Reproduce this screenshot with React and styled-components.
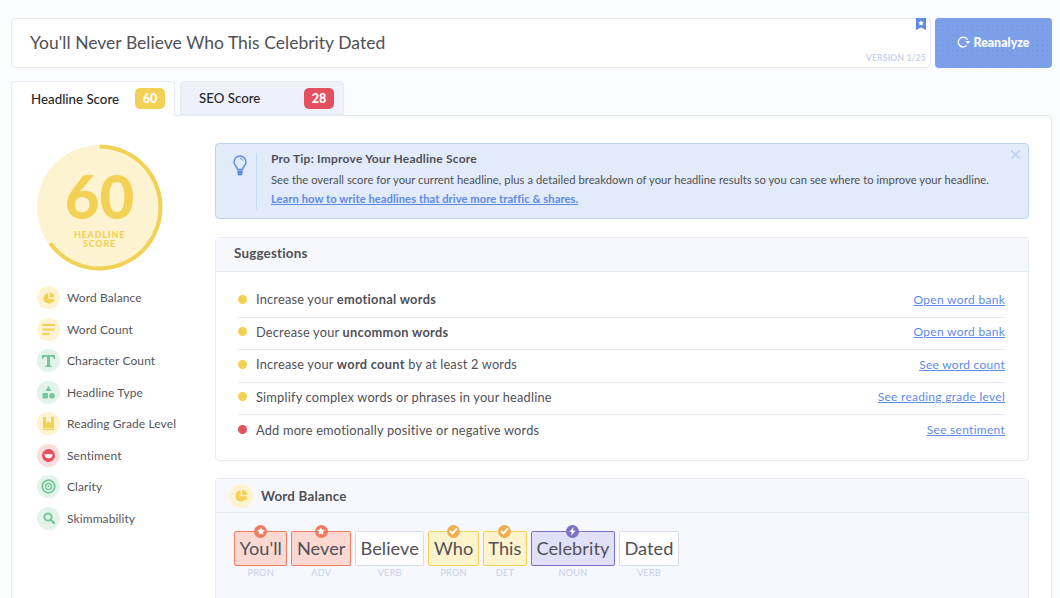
import React from "react";
import styled, { createGlobalStyle } from "styled-components";

const colors = {
  yellow: "#f3d155",
  paleYellow: "#fdf3d0",
  green: "#73c79e",
  paleGreen: "#e3f3ea",
  red: "#e4505f",
  paleRed: "#f8dedd",
  blue: "#5f8ae6",
  text: "#505056",
};

const GlobalStyle = createGlobalStyle`
  html, body {
    margin: 0;
    height: 598px;
    overflow: hidden;
    background: #fbfcff;
    font-family: Lato, "Open Sans", sans-serif;
    color: ${colors.text};
  }
  * { box-sizing: border-box; }
`;

const Page = styled.div`
  padding: 18px 8px 0 11px;
`;

const TopRow = styled.div`
  display: flex;
  gap: 4px;
  height: 50px;
`;

const HeadlineBox = styled.div`
  position: relative;
  flex: 1;
  display: flex;
  align-items: center;
  padding: 0 0 2px 18px;
  background: #fff;
  border: 1px solid #e6eaf5;
  border-radius: 4px;
  font-size: 17.5px;
  letter-spacing: 0.02px;
  color: #505055;
`;

const Bookmark = styled.svg`
  position: absolute;
  top: -1px;
  right: 4px;
`;

const Version = styled.span`
  position: absolute;
  right: 4px;
  bottom: 4px;
  font-size: 8.5px;
  font-weight: 700;
  letter-spacing: 0.2px;
  color: #c9d2e8;
`;

const AnalyzeButton = styled.button`
  width: 117px;
  display: flex;
  align-items: center;
  justify-content: center;
  gap: 3px;
  padding: 0 1px 2px 0;
  border: 0;
  border-radius: 4px;
  background-color: #7b9fe8;
  background-image: radial-gradient(#6f94df 0.6px, transparent 0.7px);
  background-size: 5px 5px;
  color: #fff;
  font-family: inherit;
  font-size: 12.4px;
  font-weight: 900;
`;

const Tabs = styled.div`
  display: flex;
  gap: 5px;
  margin-top: 13px;
  position: relative;
  z-index: 1;
`;

const Tab = styled.div`
  width: 164px;
  height: ${(p) => (p.$active ? "35px" : "34px")};
  display: flex;
  align-items: center;
  justify-content: space-between;
  padding: 0 9px ${(p) => (p.$active ? "1px" : "0")} 19px;
  border: 1px solid #e6eaf5;
  border-bottom: ${(p) => (p.$active ? "0" : "1px solid #e6eaf5")};
  border-radius: 4px 4px 0 0;
  background: ${(p) => (p.$active ? "#fff" : "#eef1f9")};
  font-size: 13.3px;
  font-weight: 500;
  color: #26262b;

  & + & {
    padding-left: 18px;
  }
`;

const ScorePill = styled.span`
  width: 30px;
  height: 21px;
  display: flex;
  align-items: center;
  justify-content: center;
  border-radius: 5px;
  background: ${(p) => p.$color};
  color: #fff;
  font-size: 12.5px;
  font-weight: 900;
`;

const Panel = styled.div`
  display: flex;
  height: 500px;
  margin-top: -1px;
  padding: 27px 22px 0 24px;
  background: #fff;
  border: 1px solid #e6eaf5;
  border-radius: 0 4px 0 0;
`;

const Sidebar = styled.aside`
  width: 179px;
  flex: none;
`;

const Gauge = styled.div`
  position: relative;
  width: 127px;
  height: 127px;
  margin: 1px 0 0 0;
`;

const GaugeText = styled.div`
  position: absolute;
  inset: 0;
  display: flex;
  flex-direction: column;
  align-items: center;
  color: ${colors.yellow};
`;

const GaugeNumber = styled.div`
  margin-top: 18px;
  font-size: 60px;
  line-height: 68px;
  font-weight: 900;
`;

const GaugeLabel = styled.div`
  font-size: 9px;
  line-height: 9px;
  font-weight: 900;
  letter-spacing: 0.8px;
  text-align: center;
`;

const MetricList = styled.ul`
  list-style: none;
  margin: 15px 0 0;
  padding: 0 0 0 1px;
  display: flex;
  flex-direction: column;
  gap: 8.5px;
`;

const Metric = styled.li`
  display: flex;
  align-items: center;
  gap: 7px;
  font-size: 12px;
  letter-spacing: 0.1px;
  color: #55555a;
`;

const IconDisc = styled.span`
  width: ${(p) => p.$size || 23}px;
  height: ${(p) => p.$size || 23}px;
  flex: none;
  display: flex;
  align-items: center;
  justify-content: center;
  border-radius: 50%;
  background: ${(p) => p.$bg};
`;

const Main = styled.main`
  flex: 1;
  min-width: 0;
`;

const TipBox = styled.section`
  position: relative;
  height: 76px;
  display: flex;
  padding: 7px 0 0 0;
  background: #e1ebfa;
  border: 1px solid #bdd3f5;
  border-radius: 4px;
`;

const TipIcon = styled.div`
  width: 41px;
  height: 56px;
  flex: none;
  margin-top: 2px;
  padding: 2px 0 0 17px;
  border-right: 1px solid #c6d8f4;
`;

const TipBody = styled.div`
  padding-left: 14px;
`;

const TipTitle = styled.div`
  font-size: 12px;
  line-height: 15px;
  font-weight: 700;
  letter-spacing: 0.22px;
`;

const TipText = styled.div`
  margin-top: 7px;
  font-size: 11.2px;
  line-height: 14px;
  letter-spacing: 0.05px;
`;

const TipLink = styled.a`
  display: block;
  margin-top: 5px;
  font-size: 11.2px;
  line-height: 14px;
  font-weight: 700;
  letter-spacing: 0.06px;
  color: ${colors.blue};
  text-decoration: underline;
`;

const CloseIcon = styled.svg`
  position: absolute;
  top: 6px;
  right: 8px;
`;

const Card = styled.section`
  margin-top: ${(p) => p.$gap}px;
  background: ${(p) => p.$bg || "#fff"};
  border: 1px solid #e6eaf5;
  border-radius: 4px;
`;

const CardHead = styled.header`
  height: 34px;
  display: flex;
  align-items: center;
  gap: 8px;
  padding: ${(p) => p.$drop}px 0 ${(p) => p.$lift}px ${(p) => p.$inset}px;
  background: #f6f8fd;
  border-bottom: 1px solid #e6eaf5;
  font-size: 13.4px;
  font-weight: 700;
  letter-spacing: 0.2px;
`;

const SuggestionList = styled.ul`
  list-style: none;
  margin: 0;
  padding: 13px 23px 12px 22px;
`;

const Suggestion = styled.li`
  height: 32.5px;
  display: flex;
  align-items: center;
  padding-bottom: 3.5px;
  font-size: 12.8px;
  letter-spacing: 0.2px;
  border-bottom: ${(p) => (p.$last ? "0" : "1px solid #e6eaf5")};

  b {
    font-weight: 700;
    letter-spacing: 0.3px;
  }
`;

const Dot = styled.span`
  width: 9px;
  height: 9px;
  margin-right: 9px;
  border-radius: 50%;
  background: ${(p) => p.$color};
`;

const ActionLink = styled.a`
  margin-left: auto;
  font-size: 12px;
  letter-spacing: 0.27px;
  color: ${colors.blue};
  text-decoration: underline;
`;

const WordRow = styled.div`
  display: flex;
  gap: 4px;
  padding: 18px 18px 25px;
`;

const WordCol = styled.div`
  display: flex;
  flex-direction: column;
  align-items: center;
`;

const Chip = styled.div`
  position: relative;
  height: 35px;
  display: flex;
  align-items: center;
  padding: 0 4.5px;
  background: ${(p) => p.$bg};
  border: 1px solid ${(p) => p.$line};
  border-radius: 2px;
  font-size: 18.2px;
  letter-spacing: 0.05px;
`;

const ChipBadge = styled.span`
  position: absolute;
  top: -7px;
  left: 50%;
  width: 13px;
  height: 13px;
  margin-left: -6.5px;
  display: flex;
  align-items: center;
  justify-content: center;
  border-radius: 50%;
  background: ${(p) => p.$color};
`;

const PartOfSpeech = styled.span`
  margin-top: 1px;
  font-size: 9.2px;
  line-height: 12px;
  color: #c5d0e8;
  letter-spacing: 0.2px;
`;

const PieIcon = ({ size = 12 }) => (
  <svg width={size} height={size} viewBox="0 0 12 12" fill={colors.yellow}>
    <path d="M5.2 1.2v5.6h5.6A5.2 5.2 0 1 1 5.2 1.2z" />
    <path d="M6.6 0.6a5 5 0 0 1 4.9 4.9H6.6z" />
    <circle cx="10.4" cy="8.8" r="1.1" />
  </svg>
);

const LinesIcon = () => (
  <svg width="13" height="11" viewBox="0 0 13 11" fill={colors.yellow}>
    <rect width="13" height="2" rx="1" />
    <rect y="4.5" width="13" height="2" rx="1" />
    <rect y="9" width="8" height="2" rx="1" />
  </svg>
);

const TypeIcon = () => (
  <svg width="13" height="12" viewBox="0 0 13 12" fill={colors.green}>
    <path d="M0 0h13v4h-1.2c-.3-1.4-.9-2.2-2.8-2.2H8v8.4l1.6.5V12H3.4v-1.3l1.6-.5V1.8H4C2.1 1.8 1.5 2.6 1.2 4H0z" />
  </svg>
);

const ShapesIcon = () => (
  <svg width="13" height="13" viewBox="0 0 13 13" fill={colors.green}>
    <path d="M6.5 0l3 5h-6z" />
    <rect x="0.5" y="7" width="5.5" height="5.5" rx="0.8" />
    <circle cx="10" cy="9.7" r="2.8" />
  </svg>
);

const BookIcon = () => (
  <svg width="11" height="13" viewBox="0 0 11 13" fill={colors.yellow}>
    <path d="M0 0h3v6l2.5-1.6L8 6V0h3v11H0z" />
    <rect y="11.7" width="11" height="1.3" />
  </svg>
);

const SmileIcon = () => (
  <svg width="13" height="13" viewBox="0 0 13 13">
    <circle cx="6.5" cy="6.5" r="6.5" fill={colors.red} />
    <path d="M2.5 5.2h8a4 4 0 0 1-8 0z" fill="#fff" />
  </svg>
);

const TargetIcon = () => (
  <svg width="15" height="15" viewBox="0 0 15 15" fill="none" stroke={colors.green}>
    <circle cx="7.5" cy="7.5" r="6.3" strokeWidth="1.8" />
    <circle cx="7.5" cy="7.5" r="3" strokeWidth="1.5" />
    <circle cx="7.5" cy="7.5" r="0.9" fill={colors.green} strokeWidth="0" />
  </svg>
);

const SearchIcon = () => (
  <svg width="12" height="12" viewBox="0 0 12 12" fill="none" stroke={colors.green}>
    <circle cx="5" cy="5" r="3.6" strokeWidth="2" />
    <path d="M8 8l3 3" strokeWidth="2.4" strokeLinecap="round" />
  </svg>
);

const BulbIcon = () => (
  <svg width="14" height="22" viewBox="0 0 14 22" fill="none" stroke={colors.blue}>
    <path
      d="M4.6 14.5c0-2.2-3.6-3.9-3.6-7.6a6 6 0 0 1 12 0c0 3.7-3.6 5.4-3.6 7.6z"
      strokeWidth="1.5"
    />
    <path d="M4.4 15.6h5.2v2.4a2.6 2.6 0 0 1-5.2 0z" fill={colors.blue} strokeWidth="0" />
    <path d="M7 3.4a3.4 3.4 0 0 1 3 2.2" strokeWidth="1" />
  </svg>
);

const StarGlyph = ({ size = 8, color = "#fff" }) => (
  <svg width={size} height={size} viewBox="0 0 10 10" fill={color}>
    <path d="M5 .4l1.5 3 3.3.5-2.4 2.3.6 3.3L5 8l-3 1.5.6-3.3L.2 3.9l3.3-.5z" />
  </svg>
);

const CheckGlyph = () => (
  <svg width="9" height="8" viewBox="0 0 9 8" fill="none" stroke="#fff" strokeWidth="1.8">
    <path d="M1 4l2.4 2.4L8 1.4" />
  </svg>
);

const BoltGlyph = () => (
  <svg width="7" height="9" viewBox="0 0 7 9" fill="#fff">
    <path d="M4.6 0L.4 5h2.4L2 9l4.6-5.4H4z" />
  </svg>
);

const metrics = [
  ["Word Balance", colors.paleYellow, <PieIcon />],
  ["Word Count", colors.paleYellow, <LinesIcon />],
  ["Character Count", colors.paleGreen, <TypeIcon />],
  ["Headline Type", colors.paleGreen, <ShapesIcon />],
  ["Reading Grade Level", colors.paleYellow, <BookIcon />],
  ["Sentiment", colors.paleRed, <SmileIcon />],
  ["Clarity", colors.paleGreen, <TargetIcon />],
  ["Skimmability", colors.paleGreen, <SearchIcon />],
];

const suggestions = [
  [colors.yellow, <>Increase your <b>emotional words</b></>, "Open word bank"],
  [colors.yellow, <>Decrease your <b>uncommon words</b></>, "Open word bank"],
  [colors.yellow, <>Increase your <b>word count</b> by at least 2 words</>, "See word count"],
  [colors.yellow, "Simplify complex words or phrases in your headline", "See reading grade level"],
  [colors.red, "Add more emotionally positive or negative words", "See sentiment"],
];

const chipStyles = {
  emotional: { bg: "#fbd9d2", line: "#f07c62", badge: "#f07c62", glyph: <StarGlyph /> },
  common: { bg: "#fef3cc", line: "#f3d155", badge: "#eeb04f", glyph: <CheckGlyph /> },
  power: { bg: "#e0e0f8", line: "#7b72c4", badge: "#7b72c4", glyph: <BoltGlyph /> },
  plain: { bg: "#fff", line: "#d5ddee" },
};

const words = [
  ["You'll", "PRON", "emotional"],
  ["Never", "ADV", "emotional"],
  ["Believe", "VERB", "plain"],
  ["Who", "PRON", "common"],
  ["This", "DET", "common"],
  ["Celebrity", "NOUN", "power"],
  ["Dated", "VERB", "plain"],
];

export default function App() {
  return (
    <Page>
      <GlobalStyle />
      <TopRow>
        <HeadlineBox>
          You'll Never Believe Who This Celebrity Dated
          <Bookmark width="10" height="12" viewBox="0 0 10 12">
            <path d="M0 0h10v12L5 9.6 0 12z" fill={colors.blue} />
            <path
              d="M5 2l.9 1.9 2 .3-1.45 1.4.35 2L5 6.7l-1.8.9.35-2L2.1 4.2l2-.3z"
              fill="#fff"
            />
          </Bookmark>
          <Version>VERSION 1/25</Version>
        </HeadlineBox>
        <AnalyzeButton>
          <svg width="14" height="12" viewBox="0 0 14 12" fill="none" stroke="#fff" strokeWidth="1.3">
            <path d="M10.6 4A4.9 4.9 0 1 0 9.8 9.4" />
            <path d="M8.4 5.2h5L10.9 8z" fill="#fff" strokeWidth="0" />
          </svg>
          Reanalyze
        </AnalyzeButton>
      </TopRow>

      <Tabs>
        <Tab $active>
          Headline Score
          <ScorePill $color={colors.yellow}>60</ScorePill>
        </Tab>
        <Tab>
          SEO Score
          <ScorePill $color={colors.red}>28</ScorePill>
        </Tab>
      </Tabs>

      <Panel>
        <Sidebar>
          <Gauge>
            <svg width="127" height="127" viewBox="0 0 127 127">
              <circle cx="63.5" cy="63.5" r="62.5" fill={colors.paleYellow} />
              <path
                d="M63.5 2.5A61 61 0 1 1 14.15 99.35"
                fill="none"
                stroke={colors.yellow}
                strokeWidth="4"
              />
            </svg>
            <GaugeText>
              <GaugeNumber>60</GaugeNumber>
              <GaugeLabel>
                HEADLINE
                <br />
                SCORE
              </GaugeLabel>
            </GaugeText>
          </Gauge>
          <MetricList>
            {metrics.map(([label, bg, icon]) => (
              <Metric key={label}>
                <IconDisc $bg={bg}>{icon}</IconDisc>
                {label}
              </Metric>
            ))}
          </MetricList>
        </Sidebar>

        <Main>
          <TipBox>
            <TipIcon>
              <BulbIcon />
            </TipIcon>
            <TipBody>
              <TipTitle>Pro Tip: Improve Your Headline Score</TipTitle>
              <TipText>
                See the overall score for your current headline, plus a detailed breakdown of your
                headline results so you can see where to improve your headline.
              </TipText>
              <TipLink>Learn how to write headlines that drive more traffic &amp; shares.</TipLink>
            </TipBody>
            <CloseIcon width="9" height="9" viewBox="0 0 9 9" stroke="#b5cbf0" strokeWidth="1.2">
              <path d="M.5.5l8 8M8.5.5l-8 8" />
            </CloseIcon>
          </TipBox>

          <Card $gap={18}>
            <CardHead $drop={0} $lift={3} $inset={18}>Suggestions</CardHead>
            <SuggestionList>
              {suggestions.map(([color, text, link], i) => (
                <Suggestion key={i} $last={i === suggestions.length - 1}>
                  <Dot $color={color} />
                  <span>{text}</span>
                  <ActionLink>{link}</ActionLink>
                </Suggestion>
              ))}
            </SuggestionList>
          </Card>

          <Card $gap={17} $bg="#f7f8fd">
            <CardHead $drop={1} $lift={0} $inset={13}>
              <IconDisc $bg={colors.paleYellow} $size={24}>
                <PieIcon size={13} />
              </IconDisc>
              Word Balance
            </CardHead>
            <WordRow>
              {words.map(([word, pos, kind]) => {
                const style = chipStyles[kind];
                return (
                  <WordCol key={word}>
                    <Chip $bg={style.bg} $line={style.line}>
                      {word}
                      {style.badge && <ChipBadge $color={style.badge}>{style.glyph}</ChipBadge>}
                    </Chip>
                    <PartOfSpeech>{pos}</PartOfSpeech>
                  </WordCol>
                );
              })}
            </WordRow>
          </Card>
        </Main>
      </Panel>
    </Page>
  );
}
